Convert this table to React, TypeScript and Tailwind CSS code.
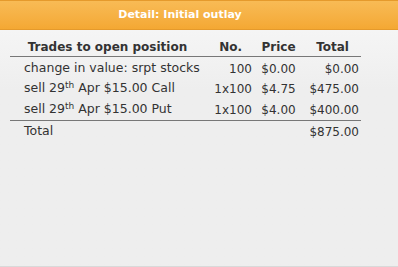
const rows = [
  { label: "change in value: srpt stocks", sup: null, no: "100", price: "$0.00", total: "$0.00" },
  { label: "sell 29", sup: "th", rest: " Apr $15.00 Call", no: "1x100", price: "$4.75", total: "$475.00" },
  { label: "sell 29", sup: "th", rest: " Apr $15.00 Put", no: "1x100", price: "$4.00", total: "$400.00" },
];

export default function App() {
  return (
    <div
      className="w-[398px] h-[267px] flex flex-col bg-[#eeeeee] text-[#333333] border-b border-[#d9d9d9]"
      style={{ fontFamily: '"DejaVu Sans", Verdana, sans-serif' }}
    >
      {/* Title bar */}
      <div className="h-[30px] shrink-0 flex items-center justify-center pr-[38px] border-t border-b border-[#e59a2c] bg-gradient-to-b from-[#f8bb55] to-[#f4a833]">
        <span className="text-white text-[11px] font-bold">Detail: Initial outlay</span>
      </div>

      <div className="flex-1 bg-gradient-to-b from-[#f5f5f5] to-[#eeeeee] to-[60px] pt-[8px] pl-[10px]">
        <div className="w-[351px] text-[12.5px]">
          {/* header */}
          <div className="grid grid-cols-[195px_47px_53px_56px] h-[19px] items-center text-[12px] font-bold border-b border-[#777777]">
            <div className="text-center">Trades to open position</div>
            <div className="text-right pr-[10px]">No.</div>
            <div className="text-center">Price</div>
            <div className="text-right pr-[12px]">Total</div>
          </div>

          {rows.map((r, i) => (
            <div
              key={i}
              className={`grid grid-cols-[195px_47px_53px_56px] h-[21px] items-center ${
                i === 0 ? "pt-[2px]" : ""
              }`}
            >
              <div className="pl-[14px] whitespace-nowrap">
                {r.label}
                {r.sup && <sup className="text-[9px]">{r.sup}</sup>}
                {r.rest}
              </div>
              <div className="text-right text-[12px]">{r.no}</div>
              <div className="text-center text-[12px]">{r.price}</div>
              <div className="text-right pr-[2px] text-[12px]">{r.total}</div>
            </div>
          ))}

          <div className="grid grid-cols-[195px_47px_53px_56px] h-[22px] items-center border-t border-[#777777]">
            <div className="pl-[14px]">Total</div>
            <div />
            <div />
            <div className="text-right pr-[2px] text-[12px]">$875.00</div>
          </div>
        </div>
      </div>
    </div>
  );
}
